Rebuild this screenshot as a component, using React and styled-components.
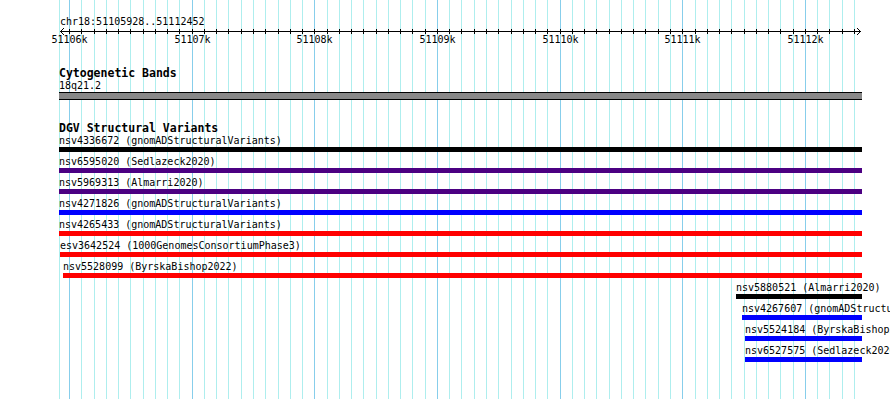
import React from 'react';
import styled, { createGlobalStyle } from 'styled-components';

const GlobalStyle = createGlobalStyle`
  html, body {
    margin: 0;
    padding: 0;
    background: #fff;
    overflow: hidden;
  }
`;

const MONO = '"DejaVu Sans Mono", "Liberation Mono", monospace';

// view / scale
const TRACK_LEFT = 59;
const TRACK_RIGHT = 862;
const ORIGIN_BP = 51106000;
const ORIGIN_X = 69;
const PX_PER_BP = 0.12265;
const toX = (bp) => ORIGIN_X + (bp - ORIGIN_BP) * PX_PER_BP;

const gridLines = Array.from({ length: 65 }, (_, k) => ({
  x: Math.round(toX(ORIGIN_BP + k * 100)),
  major: k % 10 === 0,
  label: k % 10 === 0 ? `${ORIGIN_BP / 1000 + k / 10}k` : null,
}));

const features = [
  { id: 'nsv4336672', source: 'gnomADStructuralVariants', start: 51100000, end: 51120000, color: '#000000' },
  { id: 'nsv6595020', source: 'Sedlazeck2020', start: 51100000, end: 51120000, color: '#4b0082' },
  { id: 'nsv5969313', source: 'Almarri2020', start: 51100000, end: 51120000, color: '#4b0082' },
  { id: 'nsv4271826', source: 'gnomADStructuralVariants', start: 51100000, end: 51120000, color: '#0000ff' },
  { id: 'nsv4265433', source: 'gnomADStructuralVariants', start: 51100000, end: 51120000, color: '#ff0000' },
  { id: 'esv3642524', source: '1000GenomesConsortiumPhase3', start: 51105927, end: 51120000, color: '#ff0000' },
  { id: 'nsv5528099', source: 'ByrskaBishop2022', start: 51105951, end: 51120000, color: '#ff0000' },
  { id: 'nsv5880521', source: 'Almarri2020', start: 51111438, end: 51120000, color: '#000000' },
  { id: 'nsv4267607', source: 'gnomADStructuralVariants', start: 51111487, end: 51120000, color: '#0000ff' },
  { id: 'nsv5524184', source: 'ByrskaBishop2022', start: 51111512, end: 51120000, color: '#0000ff' },
  { id: 'nsv6527575', source: 'Sedlazeck2020', start: 51111512, end: 51120000, color: '#0000ff' },
];

const Canvas = styled.div`
  position: relative;
  width: 890px;
  height: 399px;
  overflow: hidden;
  background: #fff;
  font-family: ${MONO};
  color: #000;
`;

const GridLayer = styled.svg`
  position: absolute;
  top: 0;
  left: 0;
  z-index: 0;
`;

const Content = styled.div`
  position: relative;
  z-index: 1;
`;

const RulerSvg = styled.svg`
  display: block;
  font-family: ${MONO};
  font-size: 10px;
`;

const TrackArea = styled.div`
  margin-left: ${TRACK_LEFT}px;
  width: ${TRACK_RIGHT - TRACK_LEFT}px;
`;

const Track = styled.div`
  margin-top: ${(p) => p.$gap}px;
`;

const TrackTitle = styled.div`
  font-size: 11.5px;
  font-weight: bold;
  line-height: 12px;
  white-space: nowrap;
`;

const FeatureLabel = styled.div`
  font-size: 10px;
  line-height: 13px;
  white-space: nowrap;
`;

const Band = styled.div`
  height: 6px;
  background: #888;
  border-top: 1px solid #000;
  border-bottom: 1px solid #000;
`;

const FeatureRow = styled.div`
  height: 21px;
`;

const FeatureBar = styled.div`
  height: 5px;
  background: ${(p) => p.$color};
`;

function Grid() {
  return (
    <GridLayer width="890" height="399" shapeRendering="crispEdges">
      <line x1={TRACK_LEFT + 0.5} y1="0" x2={TRACK_LEFT + 0.5} y2="399" stroke="#aeeeee" />
      {gridLines.map((g) => (
        <line
          key={g.x}
          x1={g.x + 0.5}
          y1="0"
          x2={g.x + 0.5}
          y2="399"
          stroke={g.major ? '#87ceeb' : '#aeeeee'}
        />
      ))}
    </GridLayer>
  );
}

function Ruler() {
  return (
    <RulerSvg width="890" height="48">
      <text x="60" y="25" fill="#000">chr18:51105928..51112452</text>
      <g shapeRendering="crispEdges" stroke="#000">
        <line x1="60" y1="31.5" x2="861" y2="31.5" />
        {gridLines.map((g) => (
          <line key={g.x} x1={g.x + 0.5} y1="29" x2={g.x + 0.5} y2="34" />
        ))}
      </g>
      <polyline points="64,28 60.5,31.5 64,35" fill="none" stroke="#000" />
      <polyline points="857,28 860.5,31.5 857,35" fill="none" stroke="#000" />
      {gridLines
        .filter((g) => g.label)
        .map((g) => (
          <text key={g.x} x={g.x + 0.5} y="43" textAnchor="middle" fill="#000">
            {g.label}
          </text>
        ))}
    </RulerSvg>
  );
}

function Feature({ f }) {
  const x1 = Math.max(TRACK_LEFT, Math.round(toX(f.start)));
  const x2 = Math.min(TRACK_RIGHT, Math.round(toX(f.end)));
  return (
    <FeatureRow style={{ marginLeft: x1 - TRACK_LEFT }}>
      <FeatureLabel>{`${f.id} (${f.source})`}</FeatureLabel>
      <FeatureBar $color={f.color} style={{ width: x2 - x1 }} />
    </FeatureRow>
  );
}

export default function App() {
  return (
    <Canvas>
      <GlobalStyle />
      <Grid />
      <Content>
        <Ruler />
        <TrackArea>
          <Track $gap={19}>
            <TrackTitle>Cytogenetic Bands</TrackTitle>
            <FeatureLabel>18q21.2</FeatureLabel>
            <Band />
          </Track>
          <Track $gap={22}>
            <TrackTitle>DGV Structural Variants</TrackTitle>
            {features.map((f) => (
              <Feature key={f.id} f={f} />
            ))}
          </Track>
        </TrackArea>
      </Content>
    </Canvas>
  );
}
